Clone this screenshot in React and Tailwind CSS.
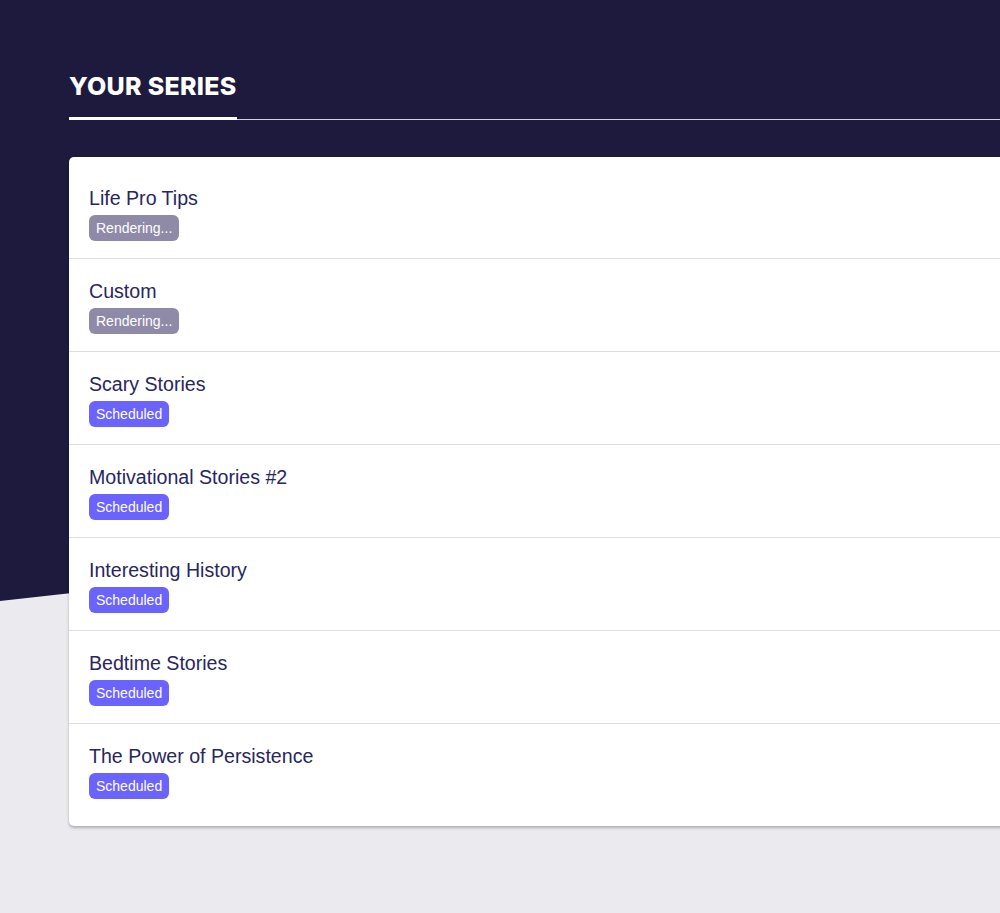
import React from "react";

const items = [
  { title: "Life Pro Tips", status: "Rendering..." },
  { title: "Custom", status: "Rendering..." },
  { title: "Scary Stories", status: "Scheduled" },
  { title: "Motivational Stories #2", status: "Scheduled" },
  { title: "Interesting History", status: "Scheduled" },
  { title: "Bedtime Stories", status: "Scheduled" },
  { title: "The Power of Persistence", status: "Scheduled" },
];

function Badge({ status }) {
  const rendering = status.startsWith("Rendering");
  return (
    <span
      className={
        "inline-flex h-[26px] items-center rounded-[6px] px-[7px] text-[14px] leading-none text-white " +
        (rendering ? "bg-[#8f8aa8]" : "bg-[#6b63fd]")
      }
    >
      {status}
    </span>
  );
}

export default function App() {
  return (
    <div className="relative min-h-[913px] w-full overflow-hidden bg-[#ebeaef] font-['Liberation_Sans',Arial,sans-serif]">
      <div className="absolute left-0 right-0 top-0 h-[601px] bg-[#1e1a3e] [clip-path:polygon(0_0,100%_0,100%_81.5%,0_100%)]" />
      <div className="relative pl-[69px] pt-[70px]">
        <div className="flex border-b border-[#d4d2e2]">
          <div className="-mb-px border-b-[3px] border-white pb-[15px]">
            <h1 className="font-['Inter',sans-serif] text-[25px] font-extrabold leading-[32px] tracking-[0.3px] text-white">
              YOUR SERIES
            </h1>
          </div>
        </div>
        <div className="mt-[37px] w-[1000px] rounded-l-[5px] bg-white pt-[9px] pb-[10px] shadow-[0_2px_3px_rgba(0,0,0,0.25)]">
          {items.map((it, i) => (
            <div
              key={it.title}
              className={
                "pl-[20px] pt-[20px] pb-[17px] " +
                (i < items.length - 1 ? "border-b border-[#dedde3]" : "")
              }
            >
              <div className="text-[19.6px] leading-[24px] text-[#28265e]">{it.title}</div>
              <div className="mt-[5px] flex">
                <Badge status={it.status} />
              </div>
            </div>
          ))}
        </div>
      </div>
    </div>
  );
}
